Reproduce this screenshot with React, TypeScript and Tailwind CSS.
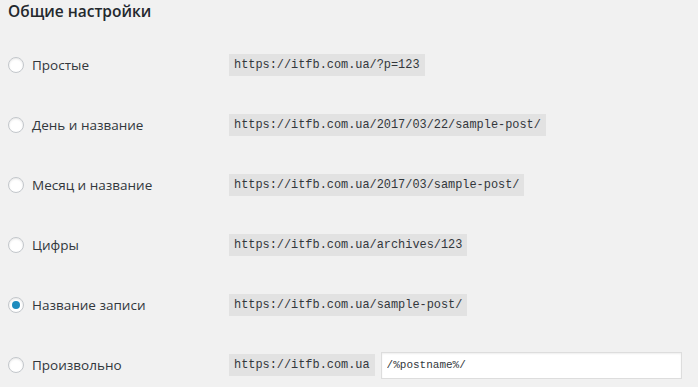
import React from "react";

const rows = [
  { label: "Простые", url: "https://itfb.com.ua/?p=123" },
  { label: "День и название", url: "https://itfb.com.ua/2017/03/22/sample-post/" },
  { label: "Месяц и название", url: "https://itfb.com.ua/2017/03/sample-post/" },
  { label: "Цифры", url: "https://itfb.com.ua/archives/123" },
  { label: "Название записи", url: "https://itfb.com.ua/sample-post/", checked: true },
];

function Radio({ checked }: { checked?: boolean }) {
  return (
    <span className="flex h-4 w-4 shrink-0 items-center justify-center rounded-full border border-[#c3c7cb] bg-white shadow-[inset_0_1px_2px_rgba(0,0,0,0.1)]">
      {checked && <span className="h-2 w-2 rounded-full bg-[#1e8cbe]"></span>}
    </span>
  );
}

function Code({ children }: { children: React.ReactNode }) {
  return (
    <code className="bg-[#e2e2e2] px-[5px] pb-[2px] pt-[3px] font-['Liberation_Mono',monospace] text-[11.9px] leading-[17px] text-[#32373c]">
      {children}
    </code>
  );
}

export default function App() {
  return (
    <div className="min-h-[387px] w-[698px] bg-[#f1f1f1] pl-2 font-['Open_Sans',sans-serif] text-[#23282d]">
      <h2 className="h-[35px] text-[15.5px] font-semibold leading-[22px]">Общие настройки</h2>

      {rows.map((r) => (
        <div key={r.label} className="flex h-[60px] items-center">
          <div className="flex w-[221px] items-center gap-2">
            <Radio checked={r.checked} />
            <span className="text-[13.5px] text-[#32373c]">{r.label}</span>
          </div>
          <Code>{r.url}</Code>
        </div>
      ))}

      {/* Произвольно */}
      <div className="flex h-[60px] items-center">
        <div className="flex w-[221px] items-center gap-2">
          <Radio />
          <span className="text-[13.5px] text-[#32373c]">Произвольно</span>
        </div>
        <Code>https://itfb.com.ua</Code>
        <input
          readOnly
          value="/%postname%/"
          className="ml-[6px] h-[27px] w-[301px] border border-[#ddd] bg-white px-[5px] font-['Liberation_Mono',monospace] text-[11px] text-[#32373c] shadow-[inset_0_1px_2px_rgba(0,0,0,0.07)] outline-none"
        />
      </div>
    </div>
  );
}
